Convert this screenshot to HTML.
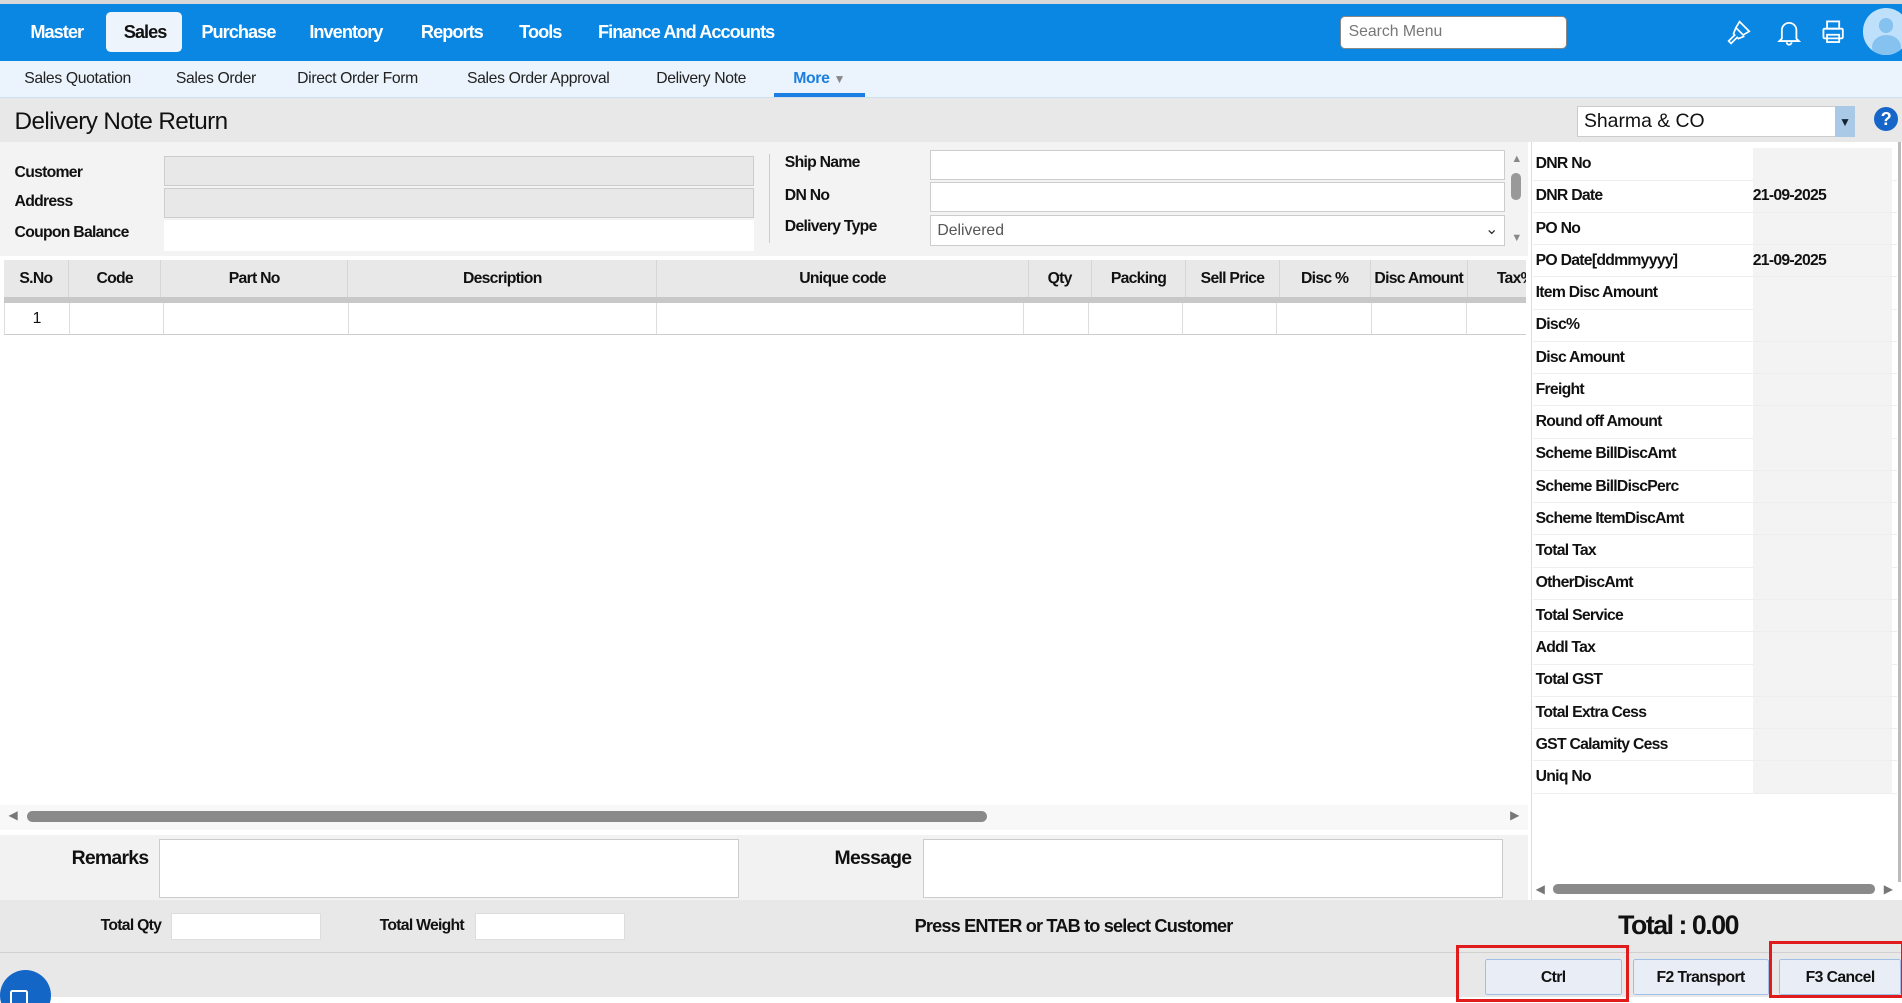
<!DOCTYPE html>
<html><head><meta charset="utf-8"><style>
html,body{margin:0;padding:0;width:1902px;height:1003px;overflow:hidden;background:#fff}
#w{zoom:1.2130;width:1568px;height:827px;position:relative;font-family:"Liberation Sans",sans-serif;color:#111;overflow:hidden}
.a{position:absolute;white-space:nowrap}
.nav{left:0;top:3px;width:1568px;height:47px;background:#0a86e3}
.nav span{position:absolute;top:15px;color:#fff;font-weight:bold;font-size:15px;letter-spacing:-0.8px}
.sub{left:0;top:50px;width:1568px;height:30px;background:#ebf3fc;border-bottom:1px solid #cfe0f0}
.sub span{position:absolute;top:8px;font-size:13px;color:#222;letter-spacing:-0.3px}
.lbl{font-size:13px;font-weight:bold;letter-spacing:-0.6px}
.inp{background:#fff;border:1px solid #ccc;box-sizing:border-box}
.th{position:absolute;top:214px;height:31px;line-height:31px;text-align:center;font-size:13px;font-weight:bold;letter-spacing:-0.6px;white-space:nowrap;overflow:hidden;border-right:1px solid #d6d6d6;box-sizing:border-box}
.td{position:absolute;top:250px;height:26px;border-right:1px solid #ddd;border-bottom:1px solid #ccc;box-sizing:border-box}
.rr{position:absolute;left:1264px;width:300px;height:26px;border-bottom:1px solid #eee;font-size:13px;font-weight:bold;line-height:26px;letter-spacing:-0.6px;white-space:nowrap}
.rr i{position:absolute;left:181px;top:0;width:115px;height:26px;background:#f3f3f3;font-style:normal}
.rr b{padding-left:2px}
.btn{position:absolute;top:791px;height:29px;line-height:29px;text-align:center;font-size:13px;font-weight:bold;letter-spacing:-0.5px;background:#e9eef6;border:1px solid #9ec0e6;border-radius:2px;box-sizing:border-box}
</style></head><body><div id="w">
<div class="a" style="left:0;top:0;width:1568px;height:3px;background:#d8d8d8"></div>
<div class="a nav">
<div class="a" style="left:87px;top:7px;width:63px;height:33px;background:#eef4fb;border-radius:4px"></div>
<span style="left:25px">Master</span><span style="left:102px;color:#111">Sales</span><span style="left:166px">Purchase</span><span style="left:255px">Inventory</span><span style="left:347px">Reports</span><span style="left:428px">Tools</span><span style="left:493px">Finance And Accounts</span>
<div class="a" style="left:1105px;top:10px;width:187px;height:27px;background:#fff;border:1px solid #888;border-radius:4px;box-sizing:border-box;font-size:13px;color:#777;padding:5px 6px">Search Menu</div>
<svg class="a" style="left:1422px;top:12px" width="24" height="24" viewBox="0 0 24 24" fill="none" stroke="#fff" stroke-width="1.4"><path d="M12 3l8 8-5 3-6-6zM9 8l-2 5 1 1-5 5 2 2 5-5 1 1 5-2"/></svg>
<svg class="a" style="left:1465px;top:12px" width="20" height="24" viewBox="0 0 20 24" fill="none" stroke="#fff" stroke-width="1.5"><path d="M4 17V10a6 6 0 0112 0v7l2 2H2zM8 20a2 2 0 004 0"/></svg>
<svg class="a" style="left:1501px;top:13px" width="20" height="22" viewBox="0 0 20 22" fill="none" stroke="#fff" stroke-width="1.5"><rect x="5" y="2" width="10" height="6"/><rect x="2" y="8" width="16" height="8" rx="1"/><rect x="5" y="13" width="10" height="6"/></svg>
<div class="a" style="left:1536px;top:4px;width:38px;height:38px;border-radius:50%;background:#bfe0fb;overflow:hidden"><div class="a" style="left:13px;top:8px;width:12px;height:12px;border-radius:50%;background:#86c2f0"></div><div class="a" style="left:7px;top:22px;width:24px;height:20px;border-radius:50%;background:#86c2f0"></div></div>
</div>
<div class="a sub"><span style="left:20px">Sales Quotation</span><span style="left:145px">Sales Order</span><span style="left:245px">Direct Order Form</span><span style="left:385px">Sales Order Approval</span><span style="left:541px">Delivery Note</span><span style="left:654px;color:#1a7fe0;font-weight:bold">More <span style="position:static;color:#888;font-size:10px">▼</span></span>
<div class="a" style="left:638px;top:27px;width:75px;height:3px;background:#1a7fe0"></div></div>
<div class="a" style="left:0;top:81px;width:1568px;height:36px;background:#e8e8e8"></div>
<div class="a" style="left:12px;top:89px;font-size:20px;letter-spacing:-0.5px">Delivery Note Return</div>
<div class="a inp" style="left:1300px;top:87px;width:229px;height:26px;font-size:16px;padding:3px 5px">Sharma &amp; CO</div>
<div class="a" style="left:1513px;top:87px;width:16px;height:26px;background:#a9c9e6;color:#123;font-size:10px;text-align:center;line-height:28px">▼</div>
<div class="a" style="left:1545px;top:88px;width:20px;height:20px;border-radius:50%;background:#1566c8;color:#fff;font-weight:bold;font-size:15px;text-align:center;line-height:20px">?</div>
<div class="a" style="left:0;top:117px;width:1260px;height:94px;background:#f3f3f3"></div>
<div class="a lbl" style="left:12px;top:135px">Customer</div><div class="a lbl" style="left:12px;top:159px">Address</div><div class="a lbl" style="left:12px;top:185px">Coupon Balance</div>
<div class="a" style="left:135px;top:129px;width:487px;height:24px;background:#e8e8e8;border:1px solid #ccc;box-sizing:border-box"></div>
<div class="a" style="left:135px;top:155px;width:487px;height:25px;background:#e8e8e8;border:1px solid #ccc;box-sizing:border-box"></div>
<div class="a" style="left:135px;top:181px;width:487px;height:26px;background:#fff"></div>
<div class="a" style="left:634px;top:127px;width:1px;height:73px;background:#ccc"></div>
<div class="a lbl" style="left:647px;top:127px">Ship Name</div><div class="a lbl" style="left:647px;top:154px">DN No</div><div class="a lbl" style="left:647px;top:180px">Delivery Type</div>
<div class="a inp" style="left:767px;top:124px;width:474px;height:24px"></div>
<div class="a inp" style="left:767px;top:150px;width:474px;height:25px"></div>
<div class="a inp" style="left:767px;top:177px;width:474px;height:26px;font-size:13px;color:#555;padding:5px 5px">Delivered<span style="position:absolute;right:5px;top:3px;color:#333">⌄</span></div>
<div class="a" style="left:1246px;top:143px;width:8px;height:22px;background:#999;border-radius:4px"></div>
<div class="a" style="left:1246px;top:126px;font-size:9px;color:#888">▲</div><div class="a" style="left:1246px;top:191px;font-size:9px;color:#888">▼</div>
<div class="a" style="left:3px;top:214px;width:1255px;height:31px;background:#e8e8e8"></div>
<div class="th" style="left:3px;width:54px">S.No</div><div class="th" style="left:57px;width:76px">Code</div><div class="th" style="left:133px;width:154px">Part No</div><div class="th" style="left:287px;width:255px">Description</div><div class="th" style="left:542px;width:306px">Unique code</div><div class="th" style="left:848px;width:52px">Qty</div><div class="th" style="left:900px;width:78px">Packing</div><div class="th" style="left:978px;width:77px">Sell Price</div><div class="th" style="left:1055px;width:75px">Disc %</div><div class="th" style="left:1130px;width:80px">Disc Amount</div><div class="th" style="left:1210px;width:48px;text-align:left;padding-left:24px;border:0">Tax%</div>
<div class="a" style="left:3px;top:245px;width:1255px;height:5px;background:#c8c8c8"></div>
<div class="td" style="left:3px;width:55px;border-left:1px solid #ddd;font-size:13px;text-align:center;line-height:26px">1</div><div class="td" style="left:58px;width:77px"></div><div class="td" style="left:135px;width:153px"></div><div class="td" style="left:288px;width:254px"></div><div class="td" style="left:542px;width:302px"></div><div class="td" style="left:844px;width:54px"></div><div class="td" style="left:898px;width:77px"></div><div class="td" style="left:975px;width:78px"></div><div class="td" style="left:1053px;width:78px"></div><div class="td" style="left:1131px;width:78px"></div><div class="td" style="left:1209px;width:49px;border-right:0"></div>
<div class="a" style="left:0;top:664px;width:1260px;height:20px;background:#f8f8f8"></div>
<div class="a" style="left:22px;top:669px;width:792px;height:9px;background:#8a8a8a;border-radius:5px"></div>
<div class="a" style="left:7px;top:666px;font-size:10px;color:#777">◀</div><div class="a" style="left:1245px;top:666px;font-size:10px;color:#777">▶</div>
<div class="a" style="left:1262px;top:117px;width:306px;height:628px;background:#fff;border-left:1px solid #ddd"></div>
<div class="rr" style="top:122px"><b>DNR No</b><i></i></div>
<div class="rr" style="top:148.6px"><b>DNR Date</b><i>21-09-2025</i></div>
<div class="rr" style="top:175.2px"><b>PO No</b><i></i></div>
<div class="rr" style="top:201.8px"><b>PO Date[ddmmyyyy]</b><i>21-09-2025</i></div>
<div class="rr" style="top:228.4px"><b>Item Disc Amount</b><i></i></div>
<div class="rr" style="top:255px"><b>Disc%</b><i></i></div>
<div class="rr" style="top:281.6px"><b>Disc Amount</b><i></i></div>
<div class="rr" style="top:308.2px"><b>Freight</b><i></i></div>
<div class="rr" style="top:334.8px"><b>Round off Amount</b><i></i></div>
<div class="rr" style="top:361.4px"><b>Scheme BillDiscAmt</b><i></i></div>
<div class="rr" style="top:388px"><b>Scheme BillDiscPerc</b><i></i></div>
<div class="rr" style="top:414.6px"><b>Scheme ItemDiscAmt</b><i></i></div>
<div class="rr" style="top:441.2px"><b>Total Tax</b><i></i></div>
<div class="rr" style="top:467.8px"><b>OtherDiscAmt</b><i></i></div>
<div class="rr" style="top:494.4px"><b>Total Service</b><i></i></div>
<div class="rr" style="top:521px"><b>Addl Tax</b><i></i></div>
<div class="rr" style="top:547.6px"><b>Total GST</b><i></i></div>
<div class="rr" style="top:574.2px"><b>Total Extra Cess</b><i></i></div>
<div class="rr" style="top:600.8px"><b>GST Calamity Cess</b><i></i></div>
<div class="rr" style="top:627.4px"><b>Uniq No</b><i></i></div>
<div class="a" style="left:1280px;top:729px;width:266px;height:8px;background:#8a8a8a;border-radius:4px"></div>
<div class="a" style="left:1266px;top:727px;font-size:10px;color:#777">◀</div><div class="a" style="left:1553px;top:727px;font-size:10px;color:#777">▶</div>
<div class="a" style="left:1565px;top:117px;width:2px;height:610px;background:#bbb"></div>
<div class="a" style="left:0;top:688px;width:1260px;height:54px;background:#f2f2f2"></div>
<div class="a" style="left:59px;top:698px;font-size:16px;font-weight:bold;letter-spacing:-0.6px">Remarks</div>
<div class="a inp" style="left:131px;top:692px;width:478px;height:48px"></div>
<div class="a" style="left:688px;top:698px;font-size:16px;font-weight:bold;letter-spacing:-0.6px">Message</div>
<div class="a inp" style="left:761px;top:692px;width:478px;height:48px"></div>
<div class="a" style="left:0;top:742px;width:1568px;height:43px;background:#e8e8e8"></div>
<div class="a lbl" style="left:83px;top:756px">Total Qty</div><div class="a" style="left:141px;top:753px;width:122px;height:20px;background:#fff;border:1px solid #ddd"></div>
<div class="a lbl" style="left:313px;top:756px">Total Weight</div><div class="a" style="left:392px;top:753px;width:122px;height:20px;background:#fff;border:1px solid #ddd"></div>
<div class="a" style="left:754px;top:755px;font-size:15px;font-weight:bold;letter-spacing:-0.7px">Press ENTER or TAB to select Customer</div>
<div class="a" style="left:1334px;top:750px;font-size:22px;font-weight:bold;letter-spacing:-1.2px">Total : 0.00</div>
<div class="a" style="left:0;top:785px;width:1568px;height:37px;background:#e8e8e8;border-top:1px solid #d0d0d0"></div>
<div class="a" style="left:0;top:822px;width:1568px;height:5px;background:#fff"></div>
<div class="btn" style="left:1224px;width:113px">Ctrl</div>
<div class="btn" style="left:1346px;width:112px">F2 Transport</div>
<div class="btn" style="left:1467px;width:100px">F3 Cancel</div>
<div class="a" style="left:1200px;top:779px;width:143px;height:47px;border:3px solid #e01b1b;box-sizing:border-box"></div>
<div class="a" style="left:1458px;top:776px;width:112px;height:47px;border:3px solid #e01b1b;box-sizing:border-box"></div>
<div class="a" style="left:0;top:800px;width:42px;height:42px;border-radius:50%;background:#1466c6"></div>
<div class="a" style="left:8px;top:816px;width:12px;height:12px;border:2px solid #fff;border-radius:2px"></div>
</div></body></html>
